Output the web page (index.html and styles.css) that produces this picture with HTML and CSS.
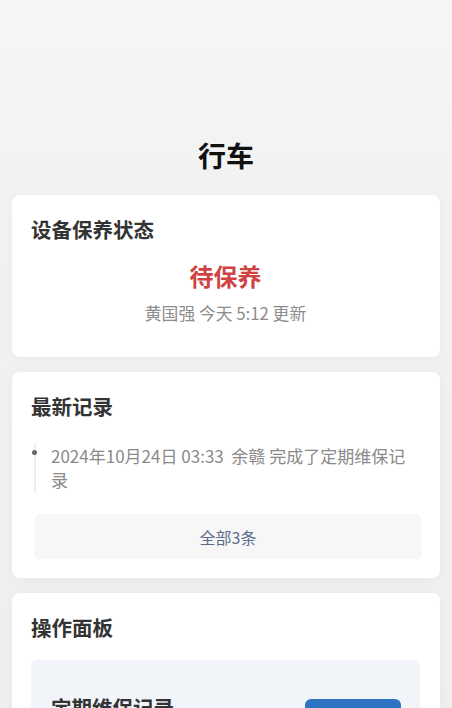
FILE: index.html
```html
<!DOCTYPE html>
<html lang="zh">
<head>
<meta charset="utf-8">
<link rel="stylesheet" href="styles.css">
</head>
<body>
<div class="page">
  <h1 class="page-title">行车</h1>

  <section class="card">
    <h2 class="card-title">设备保养状态</h2>
    <div class="status">待保养</div>
    <div class="status-sub">黄国强 今天 5:12 更新</div>
  </section>

  <section class="card card-records">
    <h2 class="card-title">最新记录</h2>
    <div class="timeline">
      <div class="timeline-item">
        <span class="dot"></span>
        <p class="timeline-text">2024年10月24日 03:33&nbsp; 余赣 完成了定期维保记录</p>
      </div>
    </div>
    <div class="more-btn">全部3条</div>
  </section>

  <section class="card">
    <h2 class="card-title">操作面板</h2>
    <div class="op-box">
      <div class="op-name">定期维保记录</div>
      <div class="op-btn">去记录</div>
    </div>
  </section>
</div>
</body>
</html>
```
FILE: styles.css
```css
* { box-sizing: border-box; }
html, body {
  margin: 0;
  padding: 0;
}
body {
  background: linear-gradient(#f6f6f6 0, #f2f2f2 200px, #efefef 100%);
  font-family: "Noto Sans CJK SC", "Noto Sans", sans-serif;
  color: #333;
  width: 452px;
  height: 708px;
  overflow: hidden;
}
.page {
  padding: 136px 12px 0;
  display: flex;
  flex-direction: column;
  gap: 15px;
}
.page-title {
  margin: 0 0 6px;
  text-align: center;
  font-size: 28px;
  line-height: 38px;
  font-weight: 700;
  color: #111;
}
.card {
  background: #fff;
  border-radius: 8px;
  padding: 20px 20px 32px 19px;
  box-shadow: 0 2px 14px rgba(0,0,0,0.035);
}
.card-title {
  margin: 0;
  font-size: 20.5px;
  line-height: 28px;
  font-weight: 700;
  color: #333;
}
.status {
  margin-top: 18px;
  text-align: center;
  font-size: 24px;
  line-height: 30px;
  font-weight: 700;
  color: #cf4343;
}
.status-sub {
  margin-top: 10px;
  text-align: center;
  font-size: 16.8px;
  line-height: 24px;
  color: #8c8c8c;
}
.card-records {
  padding-bottom: 19px;
}
.timeline {
  margin-top: 24px;
  padding-left: 2px;
}
.timeline-item {
  position: relative;
  padding-left: 15px;
  border-left: 2px solid #eeeeee;
  margin-left: 1px;
}
.dot {
  position: absolute;
  left: -4px;
  top: 6px;
  width: 5px;
  height: 5px;
  border-radius: 50%;
  background: #666;
}
.timeline-text {
  margin: 0;
  font-size: 17px;
  line-height: 24px;
  color: #8a8a8a;
}
.more-btn {
  margin: 22px -2px 0 3px;
  height: 45px;
  background: #f7f7f8;
  border-radius: 6px;
  display: flex;
  align-items: center;
  justify-content: center;
  font-size: 16px;
  color: #5d6b8a;
}
.op-box {
  margin-top: 19px;
  background: #f1f4f8;
  border-radius: 6px;
  padding: 31px 19px 30px 20px;
  display: flex;
  align-items: flex-start;
  justify-content: space-between;
}
.op-name {
  font-size: 20.5px;
  line-height: 28px;
  font-weight: 700;
  color: #333;
  margin-top: 2px;
}
.op-btn {
  width: 96px;
  height: 40px;
  margin-top: 8px;
  background: #2e74c2;
  color: #fff;
  border-radius: 6px;
  display: flex;
  align-items: center;
  justify-content: center;
  font-size: 16px;
}
```
